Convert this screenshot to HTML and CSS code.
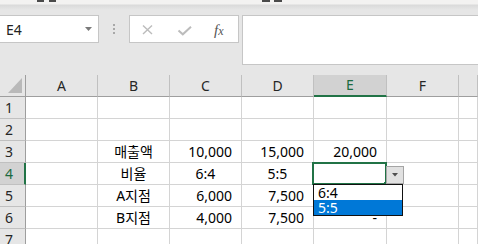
FILE: index.html
```html
<!DOCTYPE html>
<html lang="ko">
<head>
    <meta charset="UTF-8">
    <meta name="viewport" content="width=device-width, initial-scale=1.0">
    <title>Sheet1</title>
    <link rel="stylesheet" href="styles.css">
</head>
<body>
    <!-- bottom edge of the ribbon -->
    <div class="ribbon-edge">
        <span class="mark m1"></span><span class="mark m2"></span>
        <span class="mark m3"></span><span class="mark m4"></span>
    </div>

    <!-- name box + formula bar -->
    <div class="formula-area">
        <div class="name-box">
            <span class="name-text">E4</span>
            <svg class="name-caret" width="7" height="4" viewBox="0 0 7 4"><path d="M0 0 L7 0 L3.5 4 Z" fill="#7a7a7a"/></svg>
        </div>
        <div class="grip"><i></i><i></i><i></i></div>
        <div class="fx-buttons">
            <svg width="108" height="26" viewBox="0 0 108 26">
                <path d="M13 9.5 L22 18 M22 9.5 L13 18" stroke="#bcbcbc" stroke-width="1.4" fill="none"/>
                <path d="M48.5 14.5 L52.8 18.3 L61 10.8" stroke="#bcbcbc" stroke-width="2" fill="none"/>
                <text x="84" y="18.5" font-family="Liberation Serif, serif" font-style="italic" font-size="15" fill="#555">f<tspan font-size="12">x</tspan></text>
            </svg>
        </div>
        <div class="formula-input"></div>
    </div>

    <!-- worksheet -->
    <div class="sheet">
        <div class="cell corner">
            <svg width="25" height="21" viewBox="0 0 25 21"><path d="M8 18 L22 18 L22 3 Z" fill="#b9b9b9"/></svg>
        </div>
        <div class="cell col-head">A</div>
        <div class="cell col-head">B</div>
        <div class="cell col-head">C</div>
        <div class="cell col-head">D</div>
        <div class="cell col-head active">E</div>
        <div class="cell col-head">F</div>
        <div class="cell col-head"></div>

        <div class="cell row-head">1</div>
        <div class="cell"></div><div class="cell"></div><div class="cell"></div><div class="cell"></div><div class="cell"></div><div class="cell"></div><div class="cell"></div>

        <div class="cell row-head">2</div>
        <div class="cell"></div><div class="cell"></div><div class="cell"></div><div class="cell"></div><div class="cell"></div><div class="cell"></div><div class="cell"></div>

        <div class="cell row-head">3</div>
        <div class="cell"></div>
        <div class="cell center">매출액</div>
        <div class="cell num">10,000</div>
        <div class="cell num">15,000</div>
        <div class="cell num">20,000</div>
        <div class="cell"></div><div class="cell"></div>

        <div class="cell row-head active">4</div>
        <div class="cell"></div>
        <div class="cell center">비율</div>
        <div class="cell center">6:4</div>
        <div class="cell center">5:5</div>
        <div class="cell current">
            <div class="selection"></div>
            <div class="fill-handle"></div>
            <div class="dd-button">
                <svg width="6" height="4" viewBox="0 0 6 4"><path d="M0 0 L6 0 L3 3.5 Z" fill="#4f4f4f"/></svg>
            </div>
            <div class="dd-list">
                <div class="dd-item">6:4</div>
                <div class="dd-item picked">5:5</div>
            </div>
        </div>
        <div class="cell"></div><div class="cell"></div>

        <div class="cell row-head">5</div>
        <div class="cell"></div>
        <div class="cell center">A지점</div>
        <div class="cell num">6,000</div>
        <div class="cell num">7,500</div>
        <div class="cell num"></div>
        <div class="cell"></div><div class="cell"></div>

        <div class="cell row-head">6</div>
        <div class="cell"></div>
        <div class="cell center">B지점</div>
        <div class="cell num">4,000</div>
        <div class="cell num">7,500</div>
        <div class="cell num">-</div>
        <div class="cell"></div><div class="cell"></div>

        <div class="cell row-head">7</div>
        <div class="cell"></div><div class="cell"></div><div class="cell"></div><div class="cell"></div><div class="cell"></div><div class="cell"></div><div class="cell"></div>
    </div>
</body>
</html>
```

FILE: styles.css
```css
* {
    box-sizing: border-box;
}

body {
    margin: 0;
    width: 478px;
    height: 244px;
    overflow: hidden;
    background-color: #e6e6e6;
    font-family: "Noto Sans", "Noto Sans CJK KR", sans-serif;
    font-size: 14px;
    color: #000;
}

/* ribbon edge */
.ribbon-edge {
    height: 10px;
    display: flex;
    align-items: flex-start;
    background: linear-gradient(#f3f2f1 0, #f3f2f1 4px, #dadada 5px, #e6e6e6 10px);
}

.mark {
    height: 2px;
    background-color: #4a4a4a;
}

.m1 { width: 7px; margin-left: 37px; }
.m2 { width: 7px; margin-left: 5px; }
.m3 { width: 8px; margin-left: 206px; }
.m4 { width: 8px; margin-left: 4px; }

/* formula bar */
.formula-area {
    height: 65px;
    display: flex;
    align-items: flex-start;
    padding-top: 5px;
}

.name-box {
    width: 100px;
    height: 28px;
    margin-left: -1px;
    display: flex;
    align-items: center;
    padding-left: 6px;
    background: #fff;
    border: 1px solid #c6c6c6;
    color: #222;
}

.name-caret {
    margin-left: auto;
    margin-right: 6px;
}

.grip {
    width: 2px;
    margin-left: 14px;
    margin-top: 9px;
    display: flex;
    flex-direction: column;
    gap: 2px;
}

.grip i {
    width: 2px;
    height: 2px;
    background-color: #a8a8a8;
}

.fx-buttons {
    width: 110px;
    height: 28px;
    margin-left: 14px;
    background: #fff;
    border: 1px solid #c6c6c6;
}

.fx-buttons svg {
    display: block;
}

.formula-input {
    flex: 1;
    height: 50px;
    margin-left: 3px;
    margin-right: -3px;
    background: #fff;
    border: 1px solid #c6c6c6;
}

/* worksheet */
.sheet {
    display: grid;
    grid-template-columns: 26px 72px 72px 72px 72px 73px 72px 1fr;
    grid-auto-rows: 22px;
    background: #fff;
}

.cell {
    position: relative;
    border-right: 1px solid #d4d4d4;
    border-bottom: 1px solid #d4d4d4;
    line-height: 21px;
    white-space: nowrap;
    background: #fff;
}

.corner {
    background: #e6e6e6;
    border-right-color: #9e9e9e;
    border-bottom-color: #9e9e9e;
}

.corner svg {
    display: block;
}

.col-head {
    background: #e6e6e6;
    border-right-color: #c0c0c0;
    border-bottom-color: #9e9e9e;
    text-align: center;
    color: #262626;
}

.col-head.active {
    background: #d2d2d2;
    border-bottom: 2px solid #217346;
    line-height: 20px;
    color: #1b6a40;
}

.row-head {
    background: #e6e6e6;
    border-right-color: #9e9e9e;
    border-bottom-color: #c0c0c0;
    padding-left: 5px;
    color: #262626;
}

.row-head.active {
    background: #d2d2d2;
    border-right: 2px solid #217346;
    color: #1b6a40;
}

.center {
    text-align: center;
}

.num {
    text-align: right;
    padding-right: 9px;
}

/* active cell with its validation list */
.current {
    z-index: 2;
}

.selection {
    position: absolute;
    left: -2px;
    top: -1px;
    width: 75px;
    height: 23px;
    border: 2px solid #217346;
}

.fill-handle {
    position: absolute;
    left: 70px;
    top: 19px;
    width: 4px;
    height: 4px;
    background: #217346;
}

.dd-button {
    position: absolute;
    left: 72px;
    top: 3px;
    width: 18px;
    height: 18px;
    background: #e1e1e1;
    border: 1px solid #a5a5a5;
    display: flex;
    align-items: center;
    justify-content: center;
}

.dd-button svg {
    display: block;
}

.dd-list {
    position: absolute;
    left: -1px;
    top: 21px;
    width: 90px;
    height: 32px;
    background: #fff;
    border: 1px solid #111;
}

.dd-item {
    height: 15px;
    line-height: 15px;
    padding-left: 4px;
}

.dd-item.picked {
    background: #0078d7;
    color: #fff;
}
```
